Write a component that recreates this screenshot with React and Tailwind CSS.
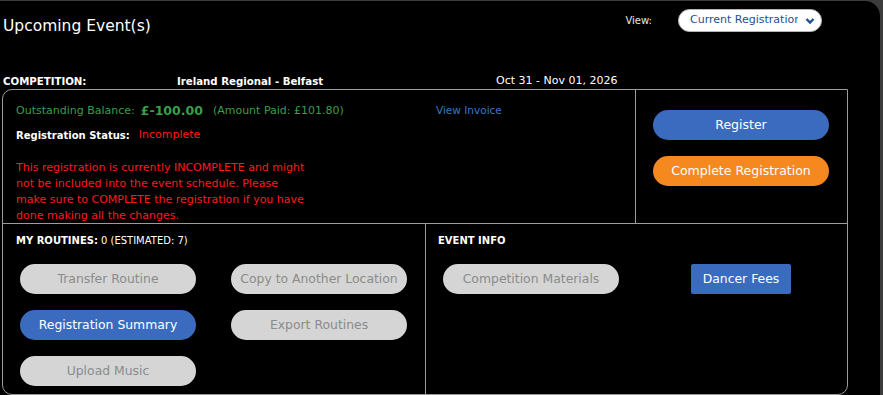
import React from "react";

const font = { fontFamily: '"DejaVu Sans", Verdana, sans-serif' };

function PillGray({ children }) {
  return (
    <div className="w-[176px] h-[30px] rounded-full bg-[#d5d5d5] text-[#8b8b8b] text-[12.4px] flex items-center justify-center whitespace-nowrap overflow-hidden">
      {children}
    </div>
  );
}

function PillBlue({ children }) {
  return (
    <div className="w-[176px] h-[30px] rounded-full bg-[#3b6bbe] text-white text-[12.4px] flex items-center justify-center whitespace-nowrap">
      {children}
    </div>
  );
}

export default function App() {
  return (
    <div className="w-[883px] h-[395px] bg-[#3c3c3c] pt-px overflow-hidden text-white" style={font}>
      <div className="w-[880px] h-[400px] bg-black rounded-tr-[15px]">
        {/* Header */}
        <div className="flex h-[48px]">
          <div className="pl-[3px] pt-[3px] h-[48px] flex items-center text-[15.5px] text-white">Upcoming Event(s)</div>
          <div className="ml-auto mr-[58px] mt-[8px] h-[23px] flex items-center">
            <span className="text-[10px] text-[#e8e8e8] mr-[26px]">View:</span>
            <div className="w-[144px] h-[23px] rounded-full bg-white border border-[#b5b5b5] flex items-center pl-[11px] pr-[6px] overflow-hidden">
              <span className="text-[11px] text-[#1f4f8c] whitespace-nowrap overflow-hidden w-[108px]">Current Registration</span>
              <svg className="ml-auto" width="10" height="8" viewBox="0 0 10 8">
                <path d="M1.5 2 L5 5.5 L8.5 2" stroke="#1f4f8c" strokeWidth="2.4" fill="none" />
              </svg>
            </div>
          </div>
        </div>

        {/* Competition row */}
        <div className="mt-[25px] h-[15px] flex items-center pl-[3px] text-[10.2px] whitespace-nowrap">
          <span className="w-[174px] font-bold">COMPETITION:</span>
          <span className="w-[319px] font-bold">Ireland Regional - Belfast</span>
          <span className="text-[11px]">Oct 31 - Nov 01, 2026</span>
        </div>

        {/* Main box */}
        <div className="ml-[2px] w-[846px] h-[306px] border border-[#9c9c9c] rounded-tl-[10px] rounded-bl-[10px] rounded-br-[10px] flex flex-col">
          {/* Top section */}
          <div className="h-[134px] border-b border-[#9c9c9c] flex">
            <div className="w-[633px] border-r border-[#9c9c9c] pl-[13px] pt-[13px]">
              <div className="h-[16px] flex items-center whitespace-nowrap">
                <div className="w-[420px] flex items-center">
                  <span className="text-[11px] text-[#3a9e4b]">Outstanding Balance:</span>
                  <span className="ml-[6px] text-[12.5px] font-bold text-[#3a9e4b]">£-100.00</span>
                  <span className="ml-[10px] text-[11px] text-[#3a9e4b]">(Amount Paid: £101.80)</span>
                </div>
                <span className="text-[10.5px] text-[#3a78c2]">View Invoice</span>
              </div>
              <div className="mt-[8px] h-[16px] flex items-center whitespace-nowrap">
                <span className="text-[10px] font-bold text-white">Registration Status:</span>
                <span className="ml-[9px] text-[11px] text-[#ff1a1a]">Incomplete</span>
              </div>
              <p className="mt-[17px] w-[293px] text-[11px] leading-[16px] text-[#ff1a1a]">
                This registration is currently INCOMPLETE and might not be included into the event schedule. Please make sure to COMPLETE the registration if you have done making all the changes.
              </p>
            </div>
            <div className="flex-1 pl-[17px] pt-[20px] flex flex-col gap-[16px]">
              <div className="w-[176px] h-[30px] rounded-full bg-[#3b6bbe] text-white text-[12.5px] flex items-center justify-center">Register</div>
              <div className="w-[176px] h-[30px] rounded-full bg-[#f5881f] text-white text-[12.5px] flex items-center justify-center whitespace-nowrap">Complete Registration</div>
            </div>
          </div>

          {/* Bottom section */}
          <div className="flex-1 flex">
            <div className="w-[423px] border-r border-[#9c9c9c] pt-[9px]">
              <div className="pl-[13px] h-[14px] flex items-center text-[10px] whitespace-nowrap">
                <span className="font-bold">MY ROUTINES:</span>
                <span className="ml-[3px]">0 (ESTIMATED: 7)</span>
              </div>
              <div className="mt-[17px] pl-[17px] grid grid-cols-[176px_176px] gap-x-[35px] gap-y-[16px]">
                <PillGray>Transfer Routine</PillGray>
                <PillGray>Copy to Another Location</PillGray>
                <PillBlue>Registration Summary</PillBlue>
                <PillGray>Export Routines</PillGray>
                <PillGray>Upload Music</PillGray>
              </div>
            </div>
            <div className="flex-1 pt-[9px]">
              <div className="pl-[12px] h-[14px] flex items-center text-[10px] font-bold">EVENT INFO</div>
              <div className="mt-[17px] pl-[17px] flex items-center">
                <PillGray>Competition Materials</PillGray>
                <div className="ml-[72px] w-[100px] h-[30px] rounded-[2px] bg-[#3b6bbe] text-white text-[12.4px] flex items-center justify-center">Dancer Fees</div>
              </div>
            </div>
          </div>
        </div>
      </div>
    </div>
  );
}
